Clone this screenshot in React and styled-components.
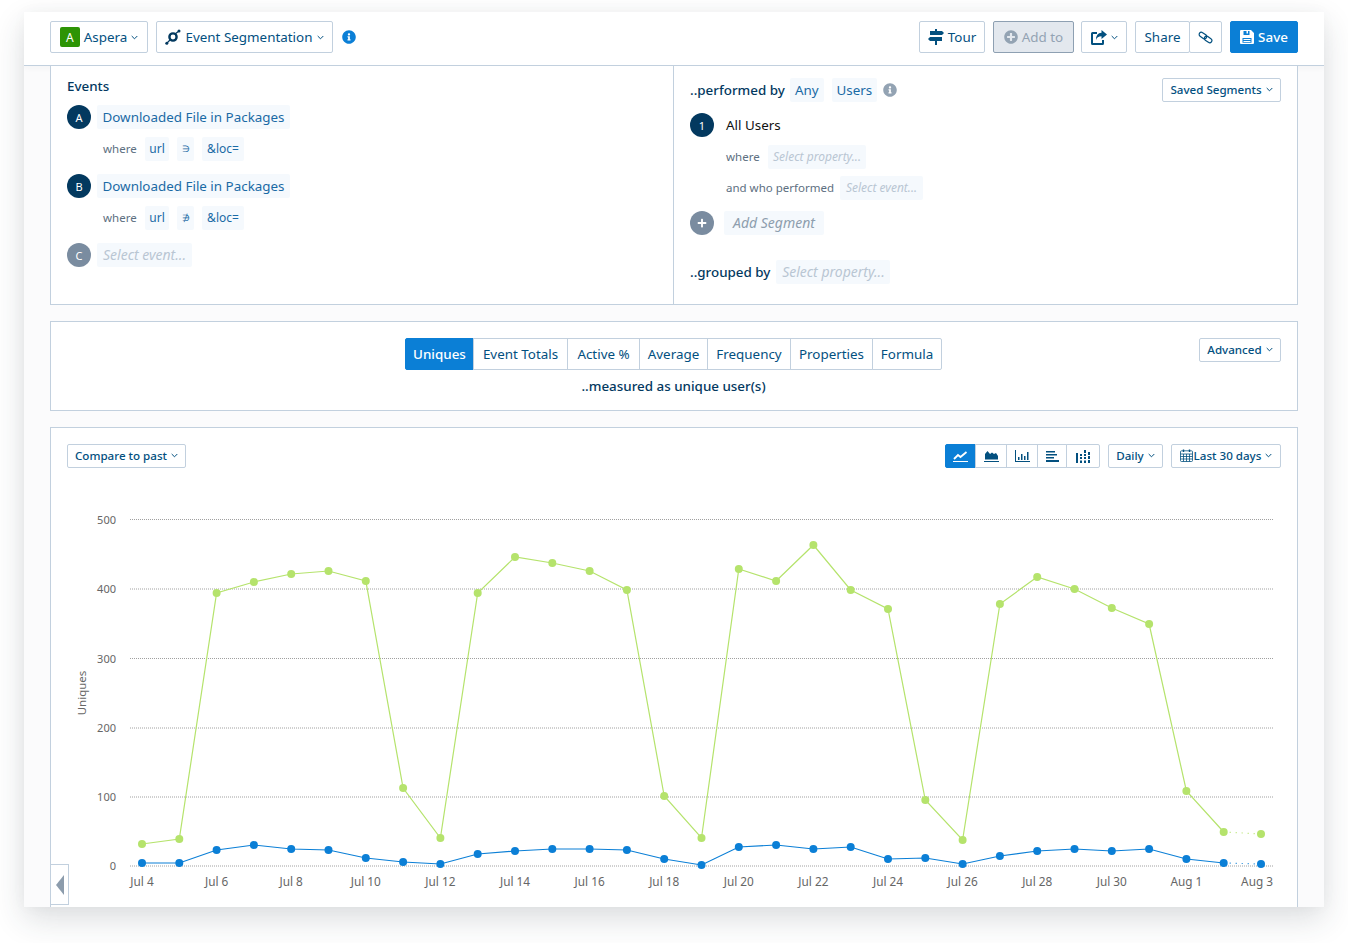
import React from "react";
import styled, { createGlobalStyle } from "styled-components";
import { FaPlusCircle, FaInfoCircle, FaPlus } from "react-icons/fa";

const Global = createGlobalStyle`
  html, body { margin: 0; padding: 0; background: #fff; height: 943px; overflow: hidden; }
  * { box-sizing: border-box; }
  body { font-family: "Noto Sans", "Liberation Sans", sans-serif; color: #03395f; }
`;

const Stage = styled.div`
  padding: 12px 24px 36px;
`;
const Card = styled.div`
  position: relative;
  width: 1300px;
  height: 895px;
  background: #fbfbfc;
  overflow: hidden;
  box-shadow: 0 12px 30px rgba(40, 50, 60, 0.16), 0 0 14px rgba(40, 50, 60, 0.03);
`;
const Header = styled.header`
  height: 54px;
  background: #fff;
  border-bottom: 1px solid #c2d0de;
  padding: 9px 26px 0;
  display: flex;
  align-items: flex-start;
  gap: 8px;
  box-shadow: 0 2px 6px rgba(40, 50, 60, 0.04);
  position: relative;
`;
const Spacer = styled.div`
  flex: 1;
`;
const Button = styled.button`
  height: ${(p) => p.$h || 32}px;
  width: ${(p) => p.$w}px;
  flex: none;
  display: inline-flex;
  align-items: center;
  justify-content: center;
  gap: ${(p) => p.$gap ?? 4}px;
  padding: 0;
  background: #fff;
  border: 1px solid #c2d0de;
  border-radius: 2px;
  color: #03507f;
  font: 400 ${(p) => p.$size || 13.4}px "Noto Sans", sans-serif;
  white-space: nowrap;
`;
const SmallButton = styled(Button).attrs({ $h: 24, $size: 11.6 })`
  font-weight: 500;
  padding-bottom: 2px;
`;
const AddButton = styled(Button)`
  background: #e3e8ee;
  border-color: #8ea0b2;
  color: #93a3b3;
  margin-right: -1px;
`;
const SaveButton = styled(Button)`
  background: #0b7fd6;
  border-color: #0b7fd6;
  color: #fff;
  font-weight: 500;
`;
const Joined = styled.div`
  display: flex;
  flex: none;
  & > button + button { margin-left: -1px; }
`;
const Badge = styled.span`
  width: 20px;
  height: 20px;
  background: #2d9405;
  color: #fff;
  border-radius: 2px;
  font-size: 12px;
  display: flex;
  align-items: center;
  justify-content: center;
`;
const InfoWrap = styled.span`
  height: 32px;
  display: flex;
  align-items: center;
  color: ${(p) => p.$c || "#0b7fd6"};
  margin-left: ${(p) => p.$ml || 1}px;
  font-size: 14px;
`;
const Main = styled.main`
  padding: 0 26px;
`;
const Panel = styled.section`
  background: #fff;
  border: 1px solid #c2d0de;
  margin-top: ${(p) => p.$mt || 0}px;
  height: ${(p) => p.$h}px;
  position: relative;
`;
const QueryPanel = styled(Panel)`
  border-top: 0;
  display: grid;
  grid-template-columns: 623px 1fr;
`;
const LeftCol = styled.div`
  border-right: 1px solid #c2d0de;
  padding: 10px 16px 0;
`;
const RightCol = styled.div`
  padding: 12px 16px 0;
  position: relative;
`;
const Heading = styled.div`
  font-size: 13.4px;
  font-weight: 500;
  height: 20px;
  line-height: 20px;
  color: #03395f;
`;
const Row = styled.div`
  display: flex;
  align-items: center;
  height: 24px;
  gap: ${(p) => p.$gap ?? 8}px;
  margin-top: ${(p) => p.$mt || 0}px;
  padding-left: ${(p) => p.$pl || 0}px;
`;
const Circle = styled.span`
  width: 24px;
  height: 24px;
  flex: none;
  border-radius: 50%;
  background: ${(p) => (p.$muted ? "#7a8ca0" : "#03395f")};
  color: #fff;
  font-size: 11px;
  display: flex;
  align-items: center;
  justify-content: center;
`;
const Chip = styled.span`
  height: 24px;
  width: ${(p) => p.$w}px;
  flex: none;
  display: inline-flex;
  align-items: center;
  justify-content: center;
  background: #f5f9fd;
  border-radius: 2px;
  white-space: nowrap;
  margin-left: ${(p) => p.$ml || 0}px;
  color: ${(p) => (p.$add ? "#8e9eae" : p.$ph ? "#b9c6d3" : "#1a6aa5")};
  font-style: ${(p) => (p.$ph ? "italic" : "normal")};
  font-size: ${(p) => p.$size || (p.$ph ? 14 : 13.4)}px;
  padding-bottom: 1px;
`;
const Muted = styled.span`
  color: #5d6f81;
  font-size: 11.5px;
  white-space: nowrap;
  width: ${(p) => p.$w}px;
  flex: none;
  padding-bottom: 1px;
`;
const Strong = styled.span`
  font-size: 13.4px;
  font-weight: 500;
  color: #03395f;
  white-space: nowrap;
`;
const Plain = styled.span`
  font-size: 13.4px;
  color: #111;
`;
const OverTop = styled.div`
  position: absolute;
  right: 16px;
  top: ${(p) => p.$top}px;
  display: flex;
`;
const Center = styled.div`
  padding: 16px 1px 0 0;
  display: flex;
  flex-direction: column;
  align-items: center;
`;
const Tabs = styled.div`
  display: flex;
  height: 32px;
`;
const Tab = styled.button`
  width: ${(p) => p.$w}px;
  margin-left: -1px;
  background: ${(p) => (p.$on ? "#0b7fd6" : "#fff")};
  color: ${(p) => (p.$on ? "#fff" : "#03507f")};
  border: 1px solid ${(p) => (p.$on ? "#0b7fd6" : "#c2d0de")};
  padding: 0;
  font: ${(p) => (p.$on ? 500 : 400)} 13.4px "Noto Sans", sans-serif;
  &:first-child { border-radius: 2px 0 0 2px; margin-left: 0; }
  &:last-child { border-radius: 0 2px 2px 0; }
`;
const Measured = styled.div`
  margin-top: 7px;
  font-size: 13.4px;
  font-weight: 500;
  color: #03395f;
`;
const Toolbar = styled.div`
  display: flex;
  gap: 8px;
  padding: 16px 16px 0;
`;
const IconTab = styled.button`
  width: ${(p) => p.$w}px;
  height: 24px;
  margin-left: -1px;
  padding: 0;
  display: flex;
  align-items: center;
  justify-content: center;
  background: ${(p) => (p.$on ? "#0b7fd6" : "#fff")};
  color: ${(p) => (p.$on ? "#fff" : "#03507f")};
  border: 1px solid ${(p) => (p.$on ? "#0b7fd6" : "#c2d0de")};
  &:first-child { margin-left: 0; border-radius: 2px 0 0 2px; }
  &:last-child { border-radius: 0 2px 2px 0; }
`;
const Collapse = styled.div`
  position: absolute;
  left: 26px;
  top: 852px;
  width: 19px;
  height: 41px;
  background: #fff;
  border: 1px solid #c2d0de;
  display: flex;
  align-items: center;
  justify-content: center;
`;
const Arrow = styled.span`
  width: 0;
  height: 0;
  border-style: solid;
  border-width: 10px 8px 10px 0;
  border-color: transparent #8c9cac transparent transparent;
`;
const ChartBox = styled.svg`
  display: block;
  position: absolute;
  left: 0;
  top: 0;
  pointer-events: none;
`;
const CalWrap = styled.span`
  display: flex;
  margin-right: -3px;
`;

const Chev = () => (
  <svg width="7" height="5" viewBox="0 0 7 5" fill="none" stroke="currentColor" strokeWidth="1">
    <path d="M0.7 1 L3.5 3.8 L6.3 1" />
  </svg>
);
const SegIcon = () => (
  <svg width="16" height="16" viewBox="0 0 16 16" fill="#03395f">
    <circle cx="8" cy="8" r="3.600" fill="none" stroke="#03395f" strokeWidth="2.400" />
    <path d="M2 14 L5 11 M10 5 L14 2" stroke="#03395f" strokeWidth="1.200" />
    <circle cx="14" cy="2" r="1.500" />
    <circle cx="1.800" cy="14.200" r="1.500" />
  </svg>
);
const TourIcon = () => (
  <svg width="16" height="16" viewBox="0 0 16 16" fill="#03507f">
    <path d="M7 0h2v2h5l2 2-2 2H2V2h5zM2 8h12v4H9v4H7v-4H2l-2-2z" />
  </svg>
);
const ShareIcon = () => (
  <svg width="16" height="15" viewBox="0 0 16 15" fill="#03507f">
    <path d="M0 3.500A1.500 1.500 0 0 1 1.500 2H6v2H2v9h9v-3h2v3.500A1.500 1.500 0 0 1 11.500 15h-10A1.500 1.500 0 0 1 0 13.500z" />
    <path d="M10.500 0L16 4.500L10.500 9V6.300C7.500 6.300 5.800 7.500 5 10C4.800 5.800 7 3 10.500 2.800z" />
  </svg>
);
const SaveIcon = () => (
  <svg width="14" height="14" viewBox="0 0 14 14" fill="#fff">
    <path fillRule="evenodd" d="M1 0h10l3 3v10a1 1 0 0 1-1 1H1a1 1 0 0 1-1-1V1a1 1 0 0 1 1-1zM3.500 1v4h6V1h-1.500v2.500H6.500V1zM2.500 8v4.800h9V8z" />
    <path d="M3.500 9h7v1h-7zM3.500 11h7v1h-7z" />
  </svg>
);
const LinkIcon = () => (
  <svg width="15" height="15" viewBox="0 0 15 15" fill="none" stroke="#03507f" strokeWidth="1.200">
    <rect x="0.800" y="3.400" width="8.200" height="4.400" rx="2.200" transform="rotate(35 5 5.600)" />
    <rect x="6" y="7.200" width="8.200" height="4.400" rx="2.200" transform="rotate(35 10 9.400)" />
  </svg>
);
const CalIcon = () => (
  <svg width="13" height="13" viewBox="0 0 13 13" fill="none" stroke="#03507f" strokeWidth="0.800">
    <rect x="0.500" y="1.800" width="12" height="10.700" rx="1" />
    <path d="M0.500 5h12M0.500 7.500h12M0.500 10h12M3.500 5v7.500M6.500 5v7.500M9.500 5v7.500" />
    <path d="M3.500 0.500v2.500M9.500 0.500v2.500" strokeWidth="1.400" />
  </svg>
);
const LineIc = () => (
  <svg width="15" height="12" viewBox="0 0 15 12" fill="none" stroke="currentColor">
    <path d="M0 11.500H15" strokeWidth="1" />
    <path d="M1 9l4-4 2.500 2 6-5" strokeWidth="1.800" />
  </svg>
);
const AreaIc = () => (
  <svg width="15" height="12" viewBox="0 0 15 12" fill="currentColor">
    <path d="M1 9.500V4l2.500-3L6 4l2-1.500 2 1.500 2-1 2 3v3.500z" />
    <path d="M0 11h15v1H0z" />
  </svg>
);
const BarIc = () => (
  <svg width="15" height="12" viewBox="0 0 15 12" fill="currentColor">
    <path d="M0 0h1v11h14v1H0zM3 7h1.500v3H3zM6 4h1.500v6H6zM9 6h1.500v4H9zM12 2h1.500v8H12z" />
  </svg>
);
const HBarIc = () => (
  <svg width="13" height="11" viewBox="0 0 13 11" fill="currentColor">
    <path d="M0 0h9v1.500H0zM0 3h11v1.500H0zM0 6h8v1.500H0zM0 9h13v2H0z" />
  </svg>
);
const HeatIc = () => (
  <svg width="14" height="13" viewBox="0 0 14 13" fill="currentColor">
    <path d="M0 3h2v10H0zM4 7h2v2H4zM4 10.500h2v2.500H4zM4 4h2v2H4zM8 0h2v3H8zM8 4h2v2H8zM8 7h2v2H8zM8 10.500h2v2.500H8zM12 2h2v3h-2zM12 6h2v3h-2zM12 10h2v3h-2z" />
  </svg>
);

const green = [844,839,593,582,574,571,581,788,838,593,557,563,571,590,796,838,569,581,545,590,609,800,840,604,577,589,608,624,791,832,834];
const blue = [863,863,850,845,849,850,858,862,864,854,851,849,849,850,859,865,847,845,849,847,859,858,864,856,851,849,851,849,859,863,864];
const ox = 24, oy = 12;
const X = (i) => 142 - ox + i * 37.3;
const pts = (a, from, to) => a.slice(from, to).map((y, i) => `${X(i + from).toFixed(1)},${y - oy}`).join(" ");
const gridY = [[500, 519.5], [400, 589], [300, 658.5], [200, 728], [100, 797], [0, 866]];
const xLabels = ["Jul 4","Jul 6","Jul 8","Jul 10","Jul 12","Jul 14","Jul 16","Jul 18","Jul 20","Jul 22","Jul 24","Jul 26","Jul 28","Jul 30","Aug 1","Aug 3"];

const Series = ({ data, color }) => (
  <g>
    <polyline points={pts(data, 0, 30)} fill="none" stroke={color} strokeWidth="1.2" />
    <polyline points={pts(data, 29, 31)} fill="none" stroke={color} strokeWidth="1.2" strokeDasharray="1 5" />
    {data.map((y, i) => <circle key={i} cx={X(i)} cy={y - oy} r="4" fill={color} />)}
  </g>
);

const Chart = () => (
  <ChartBox width="1300" height="895" viewBox="0 0 1300 895">
    {gridY.map(([v, y]) => (
      <g key={v}>
        <line x1="106" x2="1249" y1={y - oy} y2={y - oy} stroke="#a0a0a0" strokeWidth="1" strokeDasharray="1 1" />
        <text x="92" y={y - oy + 4} textAnchor="end" fontSize="11" fill="#666" fontFamily="Noto Sans">{v}</text>
      </g>
    ))}
    <text transform={`translate(62 ${693 - oy}) rotate(-90)`} textAnchor="middle" fontSize="11.500" fill="#666" fontFamily="Noto Sans">Uniques</text>
    {xLabels.map((l, i) => (
      <text key={l} x={i === 15 ? 1249 : X(i * 2)} y={886 - oy} textAnchor={i === 15 ? "end" : "middle"} fontSize="11.800" fill="#666" fontFamily="Noto Sans">{l}</text>
    ))}
    <Series data={green} color="#b5e36c" />
    <Series data={blue} color="#0b7fd6" />
  </ChartBox>
);

export default function App() {
  return (
    <Stage>
      <Global />
      <Card>
        <Header>
          <Button $w={98}><Badge>A</Badge>Aspera <Chev /></Button>
          <Button $w={177} $gap={5}><SegIcon />Event Segmentation <Chev /></Button>
          <InfoWrap><FaInfoCircle /></InfoWrap>
          <Spacer />
          <Button $w={66}><TourIcon />Tour</Button>
          <AddButton $w={81}><FaPlusCircle size={14} color="#93a3b3" />Add to</AddButton>
          <Button $w={46}><ShareIcon /><Chev /></Button>
          <Joined>
            <Button $w={55}>Share</Button>
            <Button $w={33}><LinkIcon /></Button>
          </Joined>
          <SaveButton $w={68}><SaveIcon />Save</SaveButton>
        </Header>
        <Main>
          <QueryPanel $h={239}>
            <LeftCol>
              <Heading>Events</Heading>
              <Row $mt={9} $gap={6}><Circle>A</Circle><Chip $w={193}>Downloaded File in Packages</Chip></Row>
              <Row $mt={8} $pl={36}><Muted $w={34}>where</Muted><Chip $w={24} $size={12}>url</Chip><Chip $w={17} $size={9}>∋</Chip><Chip $w={42} $size={12}>&amp;loc=</Chip></Row>
              <Row $mt={13} $gap={6}><Circle>B</Circle><Chip $w={193}>Downloaded File in Packages</Chip></Row>
              <Row $mt={8} $pl={36}><Muted $w={34}>where</Muted><Chip $w={24} $size={12}>url</Chip><Chip $w={17} $size={9}>∌</Chip><Chip $w={42} $size={12}>&amp;loc=</Chip></Row>
              <Row $mt={13} $gap={6}><Circle $muted>C</Circle><Chip $w={95} $ph>Select event...</Chip></Row>
            </LeftCol>
            <RightCol>
              <Row $gap={5}><Strong>..performed by</Strong><Chip $w={34}>Any</Chip><Chip $w={45} $ml={3}>Users</Chip><InfoWrap $c="#93a3b3" $ml={1}><FaInfoCircle /></InfoWrap></Row>
              <OverTop $top={12}><SmallButton $w={119}>Saved Segments <Chev /></SmallButton></OverTop>
              <Row $mt={11} $gap={12}><Circle>1</Circle><Plain>All Users</Plain></Row>
              <Row $mt={8} $pl={36}><Muted $w={34}>where</Muted><Chip $w={98} $ph $size={12}>Select property...</Chip></Row>
              <Row $mt={7} $pl={36}><Muted $w={106}>and who performed</Muted><Chip $w={83} $ph $size={12}>Select event...</Chip></Row>
              <Row $mt={11} $gap={10}><Circle $muted><FaPlus size={10} /></Circle><Chip $w={100} $ph $add>Add Segment</Chip></Row>
              <Row $mt={25} $gap={6}><Strong>..grouped by</Strong><Chip $w={114} $ph>Select property...</Chip></Row>
            </RightCol>
          </QueryPanel>
          <Panel $mt={16} $h={90}>
            <Center>
              <Tabs>
                <Tab $on $w={69}>Uniques</Tab>
                <Tab $w={95}>Event Totals</Tab>
                <Tab $w={73}>Active %</Tab>
                <Tab $w={69}>Average</Tab>
                <Tab $w={84}>Frequency</Tab>
                <Tab $w={83}>Properties</Tab>
                <Tab $w={70}>Formula</Tab>
              </Tabs>
              <Measured>..measured as unique user(s)</Measured>
            </Center>
            <OverTop $top={16}><SmallButton $w={82}>Advanced <Chev /></SmallButton></OverTop>
          </Panel>
          <Panel $mt={16} $h={500}>
            <Toolbar>
              <SmallButton $w={119}>Compare to past <Chev /></SmallButton>
              <Spacer />
              <Joined>
                <IconTab $on $w={31}><LineIc /></IconTab>
                <IconTab $w={32}><AreaIc /></IconTab>
                <IconTab $w={32}><BarIc /></IconTab>
                <IconTab $w={30}><HBarIc /></IconTab>
                <IconTab $w={34}><HeatIc /></IconTab>
              </Joined>
              <SmallButton $w={55}>Daily <Chev /></SmallButton>
              <SmallButton $w={110}><CalWrap><CalIcon /></CalWrap>Last 30 days <Chev /></SmallButton>
            </Toolbar>
          </Panel>
        </Main>
        <Chart />
        <Collapse><Arrow /></Collapse>
      </Card>
    </Stage>
  );
}
